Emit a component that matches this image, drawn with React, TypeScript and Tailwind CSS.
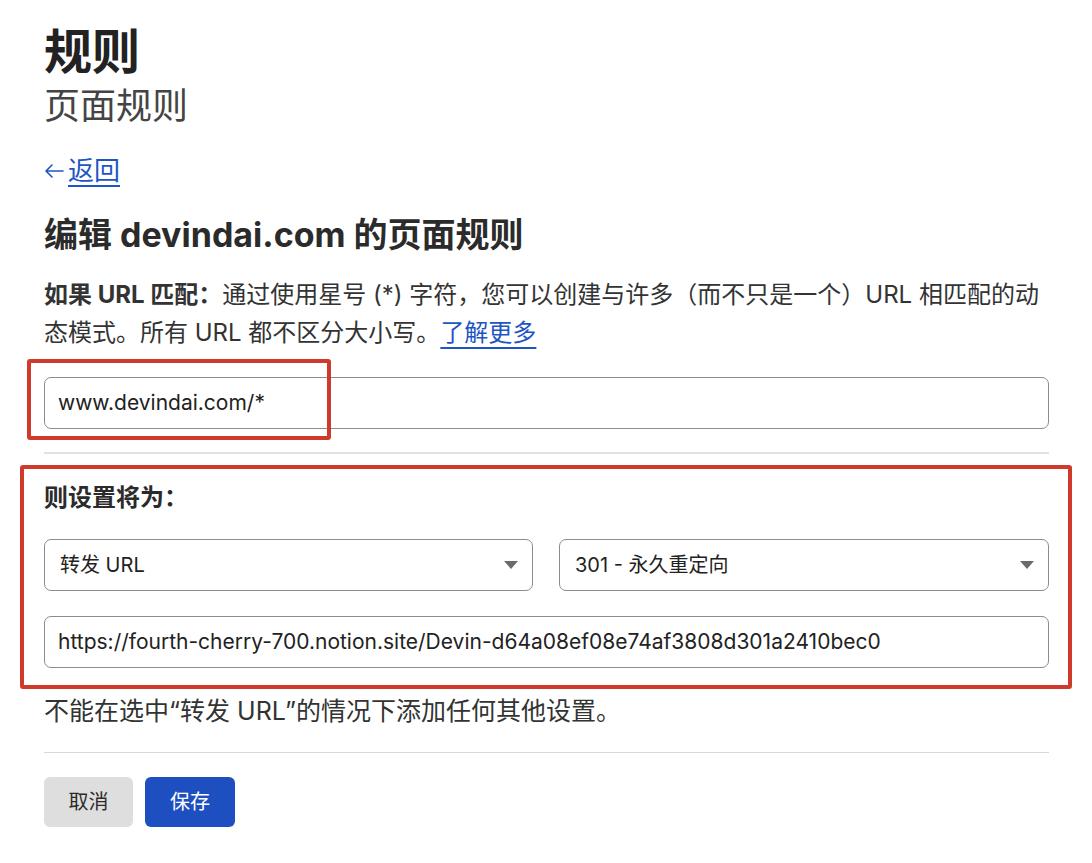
import React from "react";

const font = { fontFamily: 'Inter, "Noto Sans CJK SC", sans-serif' };

function Caret() {
  return (
    <svg width="14" height="8" viewBox="0 0 14 8" className="shrink-0">
      <path d="M0 0 L14 0 L7 8 Z" fill="#6b6b6b" />
    </svg>
  );
}

function BackArrow() {
  return (
    <svg width="20" height="16" viewBox="0 0 20 16" className="shrink-0">
      <path d="M19 8 H2 M8 2 L2 8 L8 14" fill="none" stroke="#1d55c4" strokeWidth="1.6" strokeLinecap="round" strokeLinejoin="round" />
    </svg>
  );
}

export default function App() {
  return (
    <div className="min-h-[863px] w-[1092px] bg-white text-[#2b2b2b]" style={font}>
      <div className="relative px-[44px] pt-[24px] w-[1092px]">
        <h1 className="text-[48px] leading-[56px] font-bold text-[#222]">规则</h1>
        <div className="mt-[4px] text-[36px] leading-[44px] text-[#444]">页面规则</div>
        <div className="mt-[27px] h-[32px] flex items-center text-[#1d55c4]">
          <BackArrow />
          <a className="pl-[4px] text-[26px] leading-[32px] underline underline-offset-[5px] decoration-[2px]">返回</a>
        </div>
        <h2 className="mt-[28px] text-[34px] leading-[40px] font-bold text-[#2b2b2b] whitespace-nowrap">编辑 devindai.com 的页面规则</h2>
        <p className="mt-[21px] text-[24px] leading-[38px] text-[#333] whitespace-nowrap">
          <span className="font-bold">如果 URL 匹配：</span>通过使用星号 (*) 字符，您可以创建与许多（而不只是一个）URL 相匹配的动
          <br />
          态模式。所有 URL 都不区分大小写。<a className="text-[#1d55c4] underline underline-offset-[6px] decoration-[2px]">了解更多</a>
        </p>
        <div className="mt-[25px] w-[1005px] h-[52px] rounded-[7px] border border-[#8c8c8c] flex items-center px-[13px] text-[21px] text-[#222]">
          www.devindai.com/*
        </div>
        <div className="mt-[23px] w-[1005px] h-[2px] bg-[#e2e2e2]" />
        <div className="mt-[30px] text-[24px] leading-[28px] font-bold text-[#2b2b2b]">则设置将为：</div>
        <div className="mt-[27px] w-[1005px] flex gap-[26px]">
          <div className="w-[489px] h-[52px] rounded-[7px] border border-[#8c8c8c] flex items-center justify-between pl-[15px] pr-[14px] text-[20px] text-[#222]">
            <span>转发 URL</span>
            <Caret />
          </div>
          <div className="w-[490px] h-[52px] rounded-[7px] border border-[#8c8c8c] flex items-center justify-between pl-[15px] pr-[14px] text-[20px] text-[#222]">
            <span>301 - 永久重定向</span>
            <Caret />
          </div>
        </div>
        <div className="mt-[25px] w-[1005px] h-[52px] rounded-[7px] border border-[#8c8c8c] flex items-center px-[13px] text-[21px] text-[#222] whitespace-nowrap">
          https://fourth-cherry-700.notion.site/Devin-d64a08ef08e74af3808d301a2410bec0
        </div>
        <p className="mt-[28px] text-[25px] leading-[30px] text-[#333] whitespace-nowrap">不能在选中“转发 URL”的情况下添加任何其他设置。</p>
        <div className="mt-[26px] w-[1005px] h-[1px] bg-[#d8d8d8]" />
        <div className="mt-[24px] flex gap-[12px] pb-[36px]">
          <button className="w-[89px] h-[50px] rounded-[6px] bg-[#dedede] text-[20px] text-[#2b2b2b]">取消</button>
          <button className="w-[90px] h-[50px] rounded-[6px] bg-[#1e4fc0] text-[20px] text-white">保存</button>
        </div>

        <div className="absolute left-[27px] top-[359px] w-[304px] h-[81px] border-[4px] border-[#cf3a2b] rounded-[3px] pointer-events-none" />
        <div className="absolute left-[20px] top-[465px] w-[1052px] h-[224px] border-[4px] border-[#cf3a2b] rounded-[3px] pointer-events-none" />
      </div>
    </div>
  );
}
